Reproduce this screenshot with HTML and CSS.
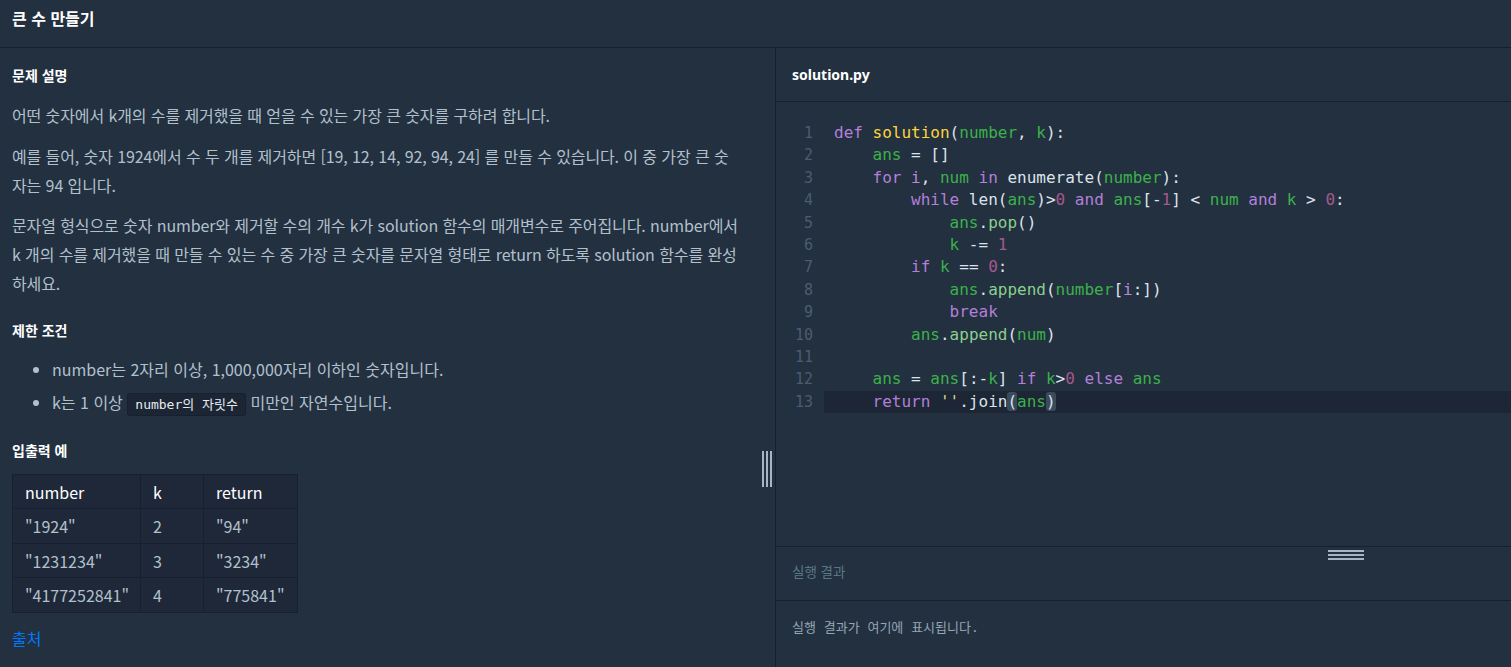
FILE: index.html
```html
<!DOCTYPE html>
<html lang="ko">
<head>
<meta charset="utf-8">
<title>큰 수 만들기</title>
<link rel="stylesheet" href="styles.css">
</head>
<body>
<header class="topbar"><h1 class="title">큰 수 만들기</h1></header>
<main class="workspace">
  <section class="problem">
    <h2 class="sec-title first">문제 설명</h2>
    <p class="para">어떤 숫자에서 k개의 수를 제거했을 때 얻을 수 있는 가장 큰 숫자를 구하려 합니다.</p>
    <p class="para">예를 들어, 숫자 1924에서 수 두 개를 제거하면 [19, 12, 14, 92, 94, 24] 를 만들 수 있습니다. 이 중 가장 큰 숫자는 94 입니다.</p>
    <p class="para">문자열 형식으로 숫자 number와 제거할 수의 개수 k가 solution 함수의 매개변수로 주어집니다. number에서 k 개의 수를 제거했을 때 만들 수 있는 수 중 가장 큰 숫자를 문자열 형태로 return 하도록 solution 함수를 완성하세요.</p>
    <h2 class="sec-title">제한 조건</h2>
    <ul class="rules">
      <li>number는 2자리 이상, 1,000,000자리 이하인 숫자입니다.</li>
      <li>k는 1 이상 <code class="inline-code">number의 자릿수</code> 미만인 자연수입니다.</li>
    </ul>
    <h2 class="sec-title">입출력 예</h2>
    <table class="examples">
      <thead><tr><th class="c1">number</th><th class="c2">k</th><th class="c3">return</th></tr></thead>
      <tbody>
        <tr><td>"1924"</td><td>2</td><td>"94"</td></tr>
        <tr><td>"1231234"</td><td>3</td><td>"3234"</td></tr>
        <tr><td>"4177252841"</td><td>4</td><td>"775841"</td></tr>
      </tbody>
    </table>
    <a class="source" href="#">출처</a>
    <div class="vhandle"><span></span><span></span><span></span></div>
  </section>
  <section class="editor-pane">
    <div class="file-tab">solution.py</div>
    <div class="editor">
      <div class="line"><span class="ln">1</span><span class="code"><span class="kw">def</span> <span class="fn">solution</span>(<span class="v">number</span>, <span class="v">k</span>):</span></div>
      <div class="line"><span class="ln">2</span><span class="code">    <span class="v">ans</span> = []</span></div>
      <div class="line"><span class="ln">3</span><span class="code">    <span class="kw">for</span> <span class="iv">i</span>, <span class="v">num</span> <span class="kw">in</span> enumerate(<span class="v">number</span>):</span></div>
      <div class="line"><span class="ln">4</span><span class="code">        <span class="kw">while</span> len(<span class="v">ans</span>)&gt;<span class="n">0</span> <span class="kw">and</span> <span class="v">ans</span>[-<span class="n">1</span>] &lt; <span class="v">num</span> <span class="kw">and</span> <span class="v">k</span> &gt; <span class="n">0</span>:</span></div>
      <div class="line"><span class="ln">5</span><span class="code">            <span class="v">ans</span>.<span class="m">pop</span>()</span></div>
      <div class="line"><span class="ln">6</span><span class="code">            <span class="v">k</span> -= <span class="n">1</span></span></div>
      <div class="line"><span class="ln">7</span><span class="code">        <span class="kw">if</span> <span class="v">k</span> == <span class="n">0</span>:</span></div>
      <div class="line"><span class="ln">8</span><span class="code">            <span class="v">ans</span>.<span class="m">append</span>(<span class="v">number</span>[<span class="iv">i</span>:])</span></div>
      <div class="line"><span class="ln">9</span><span class="code">            <span class="kw">break</span></span></div>
      <div class="line"><span class="ln">10</span><span class="code">        <span class="v">ans</span>.<span class="m">append</span>(<span class="v">num</span>)</span></div>
      <div class="line"><span class="ln">11</span><span class="code"> </span></div>
      <div class="line"><span class="ln">12</span><span class="code">    <span class="v">ans</span> = <span class="v">ans</span>[:-<span class="v">k</span>] <span class="kw">if</span> <span class="v">k</span>&gt;<span class="n">0</span> <span class="kw">else</span> <span class="v">ans</span></span></div>
      <div class="line current"><span class="ln">13</span><span class="code">    <span class="kw">return</span> <span class="s">''</span>.join<span class="bm">(</span><span class="v">ans</span><span class="bm">)</span></span></div>
    </div>
    <div class="result-head">실행 결과<div class="hhandle"><span></span><span></span><span></span></div></div>
    <div class="result-body">실행 결과가 여기에 표시됩니다.</div>
  </section>
</main>
</body>
</html>
```
FILE: styles.css
```css
* { box-sizing: border-box; }
html, body { margin: 0; padding: 0; }
body {
  width: 1511px;
  height: 667px;
  overflow: hidden;
  background: #223040;
  color: #b2c0cc;
  font-family: "Noto Sans CJK KR", "Noto Sans", sans-serif;
}
.topbar {
  height: 48px;
  border-bottom: 1px solid #172030;
  padding: 8px 0 0 12px;
}
.title {
  margin: 0;
  font-size: 16px;
  font-weight: 700;
  color: #ffffff;
  line-height: 20px;
}
.workspace {
  display: flex;
  height: 619px;
}
.problem {
  position: relative;
  width: 776px;
  flex: none;
  border-right: 1px solid #172030;
  padding: 17px 36px 0 12px;
}
.sec-title {
  margin: 0;
  font-size: 14px;
  line-height: 20px;
  font-weight: 700;
  color: #ffffff;
}
.para {
  margin: 16px 0 0 0;
  font-size: 16px;
  line-height: 28.8px;
  letter-spacing: -0.1px;
}
.para + .para { margin-top: 12px; }
.para + .sec-title { margin-top: 22px; }
.rules {
  margin: 13px 0 0 0;
  padding-left: 40px;
  font-size: 16px;
  line-height: 33px;
}
.rules li::marker { color: #b2c0cc; }
.inline-code {
  font-family: "DejaVu Sans Mono", "Noto Sans CJK KR", monospace;
  font-size: 13px;
  background: #1b2533;
  border: 1px solid #172030;
  border-radius: 3px;
  padding: 3px 7px;
  color: #e6ebf0;
}
.rules + .sec-title { margin-top: 19px; }
.examples {
  margin-top: 14px;
  border-collapse: collapse;
  background: #1e2838;
  font-size: 16px;
}
.examples th, .examples td {
  border: 1px solid #172030;
  height: 34.5px;
  padding: 0 8px 0 12px;
  text-align: left;
  font-weight: 400;
  white-space: nowrap;
}
.examples th { color: #ffffff; }
.examples .c1 { width: 128px; }
.examples .c2 { width: 63px; }
.examples .c3 { width: 94px; }
.source {
  display: block;
  margin-top: 13px;
  color: #0078ff;
  text-decoration: none;
  font-size: 16px;
  line-height: 24px;
}
.vhandle {
  position: absolute;
  right: 3px;
  top: 403px;
  height: 36px;
  display: flex;
  gap: 2px;
}
.vhandle span {
  width: 2px;
  height: 36px;
  background: #a7b6c2;
}
.editor-pane {
  flex: 1;
  display: flex;
  flex-direction: column;
  min-width: 0;
}
.file-tab {
  height: 54px;
  border-bottom: 1px solid #172030;
  display: flex;
  align-items: center;
  padding-left: 16px;
  font-size: 14px;
  font-weight: 700;
  color: #ffffff;
  font-family: "Noto Sans", "Noto Sans CJK KR", sans-serif;
}
.editor {
  height: 445px;
  padding-top: 20px;
  font-family: "DejaVu Sans Mono", monospace;
  font-size: 16px;
  color: #dde3ea;
  border-bottom: 1px solid #172030;
}
.line {
  display: flex;
  height: 22.42px;
  line-height: 22.42px;
  white-space: pre;
}
.ln {
  width: 48px;
  flex: none;
  text-align: right;
  padding-right: 11px;
  color: #4c5d6e;
  font-size: 15px;
}
.code { padding-left: 10px; flex: 1; }
.line.current .code { background: #1c2634; }
.kw { color: #b47fd9; }
.fn { color: #ffd43b; }
.v { color: #3cb04a; }
.iv { color: #b489d6; }
.n { color: #a6588d; }
.m { color: #8bcf8e; }
.s { color: #d9d49c; }
.bm { background: #3a4b5c; border-radius: 3px; }
.result-head {
  position: relative;
  height: 54px;
  border-bottom: 1px solid #172030;
  padding: 14px 0 0 16px;
  font-size: 13.5px;
  line-height: 20px;
  color: #5a7688;
}
.hhandle {
  position: absolute;
  left: 552px;
  top: 3px;
  display: flex;
  flex-direction: column;
  gap: 2px;
}
.hhandle span {
  width: 36px;
  height: 2px;
  background: #a7b6c2;
}
.result-body {
  padding: 17px 16px;
  font-family: "DejaVu Sans Mono", "Noto Sans CJK KR", monospace;
  font-size: 13px;
  line-height: 20px;
  color: #94a6b3;
}
```
